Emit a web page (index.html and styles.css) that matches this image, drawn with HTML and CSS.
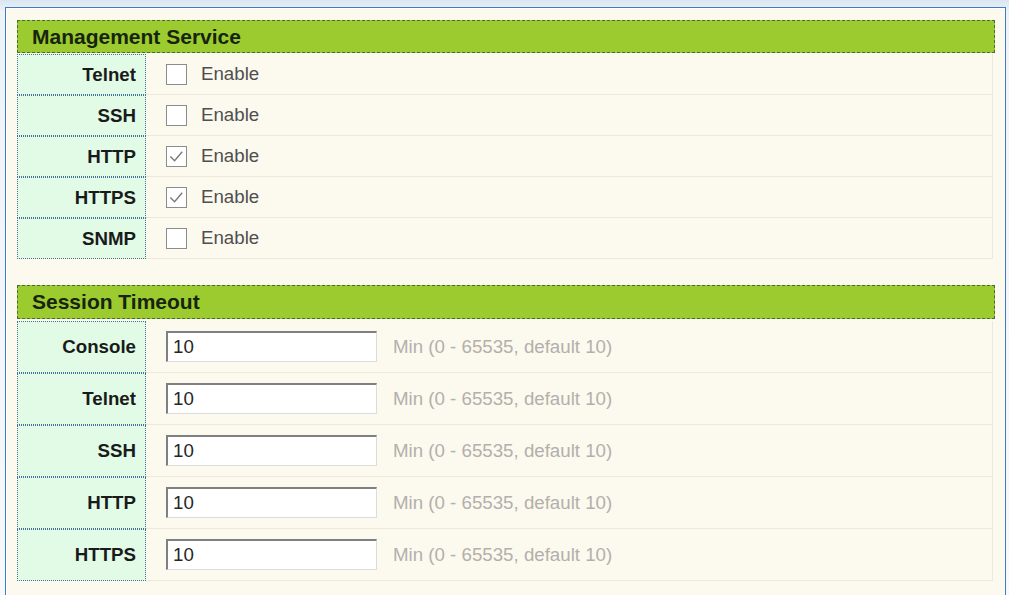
FILE: index.html
```html
<!DOCTYPE html>
<html lang="en">
<head>
  <meta charset="UTF-8" />
  <title>Management</title>
  <link rel="stylesheet" href="styles.css">
</head>
<body>
  <div class="frame">
    <div class="section">
      <div class="section-title">Management Service</div>
      <div class="rows rows-service">
        <div class="label">Telnet</div>
        <div class="field"><span class="box"></span><span class="text">Enable</span></div>
        <div class="label">SSH</div>
        <div class="field"><span class="box"></span><span class="text">Enable</span></div>
        <div class="label">HTTP</div>
        <div class="field"><span class="box checked"><svg viewBox="0 0 20 20"><path d="M3.5 10 L8 14.5 L16 5" /></svg></span><span class="text">Enable</span></div>
        <div class="label">HTTPS</div>
        <div class="field"><span class="box checked"><svg viewBox="0 0 20 20"><path d="M3.5 10 L8 14.5 L16 5" /></svg></span><span class="text">Enable</span></div>
        <div class="label">SNMP</div>
        <div class="field"><span class="box"></span><span class="text">Enable</span></div>
      </div>
    </div>

    <div class="section">
      <div class="section-title">Session Timeout</div>
      <div class="rows rows-timeout">
        <div class="label">Console</div>
        <div class="field"><input class="num" type="text" value="10"><span class="hint">Min (0 - 65535, default 10)</span></div>
        <div class="label">Telnet</div>
        <div class="field"><input class="num" type="text" value="10"><span class="hint">Min (0 - 65535, default 10)</span></div>
        <div class="label">SSH</div>
        <div class="field"><input class="num" type="text" value="10"><span class="hint">Min (0 - 65535, default 10)</span></div>
        <div class="label">HTTP</div>
        <div class="field"><input class="num" type="text" value="10"><span class="hint">Min (0 - 65535, default 10)</span></div>
        <div class="label">HTTPS</div>
        <div class="field"><input class="num" type="text" value="10"><span class="hint">Min (0 - 65535, default 10)</span></div>
      </div>
    </div>
  </div>
</body>
</html>
```

FILE: styles.css
```css
html, body {
  height: 100%;
}

body {
  margin: 0;
  font-family: 'Liberation Sans', Arial, sans-serif;
  background: linear-gradient(180deg, #d9e6f2 0, #eef3f8 12px, #f6f8fb 100%);
  overflow: hidden;
}

.frame {
  margin: 7px 3px 0 5px;
  height: 100%;
  box-sizing: border-box;
  border: 1px solid #3f7bc2;
  border-bottom: none;
  box-shadow: inset 1px 1px 0 #ffffff;
  background: #fcf9ef;
  padding: 12px 10px 0 11px;
}

.section {
  margin-bottom: 26px;
}

.section-title {
  height: 33px;
  box-sizing: border-box;
  background: #9bcb2e;
  border: 1px dashed #4a6a38;
  color: #17240f;
  font-size: 21px;
  font-weight: bold;
  line-height: 31px;
  padding-left: 14px;
}

.section + .section .section-title {
  height: 34px;
  line-height: 32px;
}

.rows {
  display: grid;
  grid-template-columns: 129px 1fr;
  margin-right: 2px;
}

.rows-service {
  grid-auto-rows: 41px;
  margin-top: 1px;
}

.rows-timeout {
  grid-auto-rows: 52px;
  margin-top: 2px;
}

.label {
  background: #e1fbe6;
  border: 1px dotted #46729a;
  box-sizing: border-box;
  display: flex;
  align-items: center;
  justify-content: flex-end;
  padding-right: 9px;
  font-size: 18.7px;
  font-weight: bold;
  color: #1a1a1a;
}

.field {
  display: flex;
  align-items: center;
  padding-left: 20px;
  border-bottom: 1px solid #eee8da;
  border-right: 1px solid #eee8da;
  font-size: 18.7px;
}

.box {
  width: 19px;
  height: 19px;
  border: 1px solid #8c8c8c;
  background: #ffffff;
  display: inline-flex;
}

.box svg {
  width: 19px;
  height: 19px;
  fill: none;
  stroke: #7a7a7a;
  stroke-width: 1.5;
}

.text {
  margin-left: 14px;
  color: #4f4f4f;
}

.num {
  width: 211px;
  height: 31px;
  box-sizing: border-box;
  margin: 0;
  padding: 0 5px;
  border: 1px solid;
  border-color: #808080 #dcdcdc #dcdcdc #808080;
  border-width: 2px 1px 1px 2px;
  background: #ffffff;
  font-family: 'Liberation Sans', Arial, sans-serif;
  font-size: 18.7px;
  color: #262626;
  outline: none;
}

.hint {
  margin-left: 16px;
  color: #b3b0ab;
}
```
